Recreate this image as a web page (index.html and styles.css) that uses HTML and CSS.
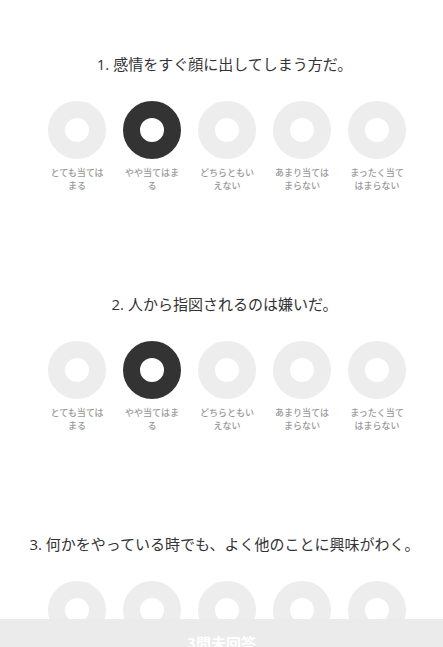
FILE: index.html
```html
<!DOCTYPE html>
<html lang="ja">
<head>
<meta charset="utf-8">
<title>診断</title>
<link rel="stylesheet" href="styles.css">
</head>
<body>
<main class="questions">
  <section class="question">
    <h2 class="question-title">1. 感情をすぐ顔に出してしまう方だ。</h2>
    <div class="options">
      <div class="option"><span class="ring"></span><span class="label">とても当てはまる</span></div>
      <div class="option"><span class="ring selected"></span><span class="label">やや当てはまる</span></div>
      <div class="option"><span class="ring"></span><span class="label">どちらともいえない</span></div>
      <div class="option"><span class="ring"></span><span class="label">あまり当てはまらない</span></div>
      <div class="option"><span class="ring"></span><span class="label">まったく当てはまらない</span></div>
    </div>
  </section>
  <section class="question">
    <h2 class="question-title">2. 人から指図されるのは嫌いだ。</h2>
    <div class="options">
      <div class="option"><span class="ring"></span><span class="label">とても当てはまる</span></div>
      <div class="option"><span class="ring selected"></span><span class="label">やや当てはまる</span></div>
      <div class="option"><span class="ring"></span><span class="label">どちらともいえない</span></div>
      <div class="option"><span class="ring"></span><span class="label">あまり当てはまらない</span></div>
      <div class="option"><span class="ring"></span><span class="label">まったく当てはまらない</span></div>
    </div>
  </section>
  <section class="question">
    <h2 class="question-title">3. 何かをやっている時でも、よく他のことに興味がわく。</h2>
    <div class="options">
      <div class="option"><span class="ring"></span><span class="label">とても当てはまる</span></div>
      <div class="option"><span class="ring"></span><span class="label">やや当てはまる</span></div>
      <div class="option"><span class="ring"></span><span class="label">どちらともいえない</span></div>
      <div class="option"><span class="ring"></span><span class="label">あまり当てはまらない</span></div>
      <div class="option"><span class="ring"></span><span class="label">まったく当てはまらない</span></div>
    </div>
  </section>
</main>
<footer class="status-bar">3問未回答</footer>
</body>
</html>
```

FILE: styles.css
```css
html, body {
  margin: 0;
  padding: 0;
  background: #ffffff;
}
body {
  font-family: "Open Sans", "Noto Sans CJK JP", sans-serif;
  color: #333333;
  overflow: hidden;
}
.questions {
  padding-top: 54px;
  display: flex;
  flex-direction: column;
  gap: 102px;
}
.question {
  display: flex;
  flex-direction: column;
  align-items: center;
}
.question-title {
  margin: 0;
  font-size: 15px;
  font-weight: 400;
  line-height: 20px;
  color: #333333;
  padding-left: 6px;
  white-space: nowrap;
}
.options {
  margin-top: 27px;
  display: flex;
  justify-content: center;
  padding-left: 11px;
}
.option {
  width: 75px;
  display: flex;
  flex-direction: column;
  align-items: center;
}
.ring {
  display: block;
  width: 58px;
  height: 58px;
  box-sizing: border-box;
  border-radius: 50%;
  border: 17px solid #ededed;
  background: #ffffff;
}
.ring.selected {
  border-color: #333333;
}
.label {
  margin-top: 7px;
  width: 58px;
  text-align: center;
  font-family: "Noto Sans CJK JP", sans-serif;
  font-size: 9px;
  line-height: 13px;
  color: #999999;
  font-weight: 500;
}
.status-bar {
  position: fixed;
  left: 0;
  right: 0;
  bottom: 0;
  height: 28px;
  box-sizing: border-box;
  padding-top: 14px;
  background: #ebebeb;
  color: #ffffff;
  text-align: center;
  font-family: "Noto Sans CJK JP", sans-serif;
  font-size: 15px;
  font-weight: 700;
  line-height: 20px;
  overflow: hidden;
}
```
